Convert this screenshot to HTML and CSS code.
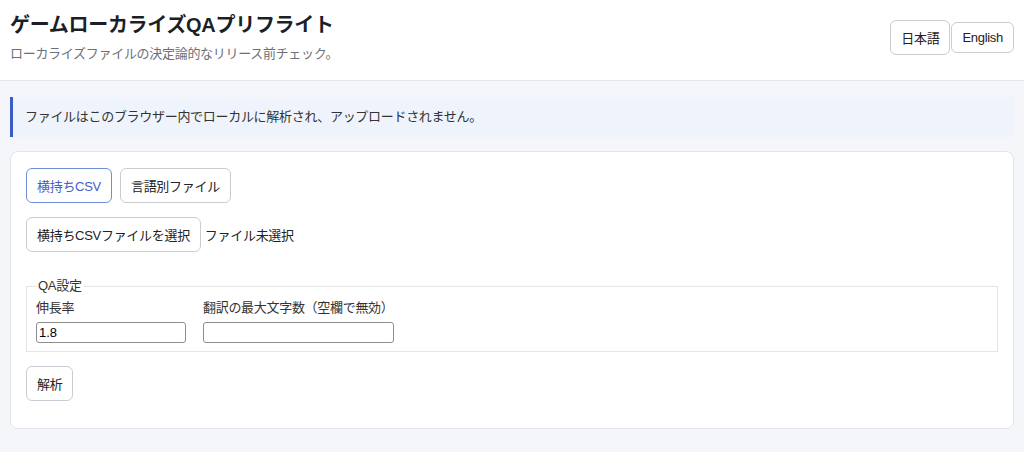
FILE: index.html
```html
<!DOCTYPE html>
<html lang="ja">
<head>
  <meta charset="UTF-8">
  <meta name="viewport" content="width=device-width, initial-scale=1">
  <title>ゲームローカライズQAプリフライト</title>
  <link rel="stylesheet" href="styles.css">
</head>
<body>
  <!-- Kopfzeile: Titel und Sprachwahl -->
  <header class="top-bar">
    <div class="title-block">
      <h1 class="app-title">ゲームローカライズQAプリフライト</h1>
      <p class="app-subtitle">ローカライズファイルの決定論的なリリース前チェック。</p>
    </div>
    <div class="lang-switch">
      <button class="btn lang-btn active">日本語</button>
      <button class="btn lang-btn">English</button>
    </div>
  </header>

  <main class="content">
    <div class="notice">ファイルはこのブラウザー内でローカルに解析され、アップロードされません。</div>

    <section class="card">
      <!-- Eingabemodus -->
      <div class="mode-tabs">
        <button class="btn tab selected">横持ちCSV</button>
        <button class="btn tab">言語別ファイル</button>
      </div>

      <!-- Dateiauswahl -->
      <div class="file-row">
        <label class="btn file-btn" for="csvFile">横持ちCSVファイルを選択</label>
        <input type="file" id="csvFile" class="file-hidden" accept=".csv">
        <span class="file-name">ファイル未選択</span>
      </div>

      <!-- QA-Einstellungen -->
      <fieldset class="qa-settings">
        <legend>QA設定</legend>
        <div class="field-row">
          <div class="field field-ratio">
            <label for="ratio">伸長率</label>
            <input type="text" id="ratio" value="1.8">
          </div>
          <div class="field field-max">
            <label for="maxChars">翻訳の最大文字数（空欄で無効）</label>
            <input type="text" id="maxChars">
          </div>
        </div>
      </fieldset>

      <button class="btn run-btn">解析</button>
    </section>
  </main>
</body>
</html>
```

FILE: styles.css
```css
/* Grundlayout */
body {
  margin: 0;
  background-color: #f5f6f9;
  font-family: "Liberation Sans", "Noto Sans CJK JP", sans-serif;
  font-size: 13px;
  letter-spacing: -0.3px;
  color: #222;
}

/* Kopfzeile */
.top-bar {
  display: flex;
  justify-content: space-between;
  align-items: center;
  padding: 11px 10px 17px;
  background-color: #fff;
  border-bottom: 1px solid #e4e6ea;
}
.app-title {
  margin: 0;
  font-size: 20px;
  line-height: 28px;
  font-weight: 700;
  color: #1b1f27;
}
.app-subtitle {
  margin: 6px 0 0;
  line-height: 18px;
  color: #6b7079;
}
.lang-switch {
  display: flex;
  align-items: center;
  gap: 1px;
}

/* Buttons */
.btn {
  display: inline-block;
  padding: 7px 10px;
  font-family: inherit;
  font-size: 13px;
  letter-spacing: inherit;
  line-height: normal;
  color: #222;
  background-color: #fff;
  border: 1px solid #c9cdd3;
  border-radius: 6px;
  cursor: pointer;
}
.btn:hover {
  background-color: #f3f4f6;
}

/* Hinweisbox */
.content {
  padding: 16px 10px;
}
.notice {
  padding: 12px 12px;
  line-height: 16px;
  background-color: #eef3fc;
  border-left: 3px solid #3a5cc5;
  color: #333;
}

/* Karte */
.card {
  margin-top: 14px;
  padding: 16px 15px 27px;
  background-color: #fff;
  border: 1px solid #e2e5ea;
  border-radius: 8px;
}
.mode-tabs {
  display: flex;
  gap: 8px;
}
.tab.selected {
  color: #3f61c8;
  border-color: #6f8ed8;
}

/* Dateiauswahl */
.file-row {
  display: flex;
  align-items: center;
  gap: 4px;
  margin-top: 14px;
}
.file-hidden {
  display: none;
}
.file-name {
  color: #222;
}

/* QA-Einstellungen */
.qa-settings {
  margin: 26px 0 0;
  padding: 5px 9px 8px;
  border: 1px solid #e4e6ea;
}
.qa-settings legend {
  padding: 0 2px;
  line-height: 16px;
  color: #333;
}
.field-row {
  display: flex;
  gap: 17px;
}
.field {
  display: flex;
  flex-direction: column;
}
.field label {
  line-height: 18px;
  margin-bottom: 5px;
  color: #333;
}
.field input {
  box-sizing: border-box;
  height: 21px;
  padding: 1px 2px;
  font-family: inherit;
  font-size: 13px;
  border: 1px solid #8e8e8e;
  border-radius: 3px;
}
.field-ratio input {
  width: 150px;
}
.field-max input {
  width: 191px;
}

/* Analyse-Button */
.run-btn {
  margin-top: 14px;
}
```
